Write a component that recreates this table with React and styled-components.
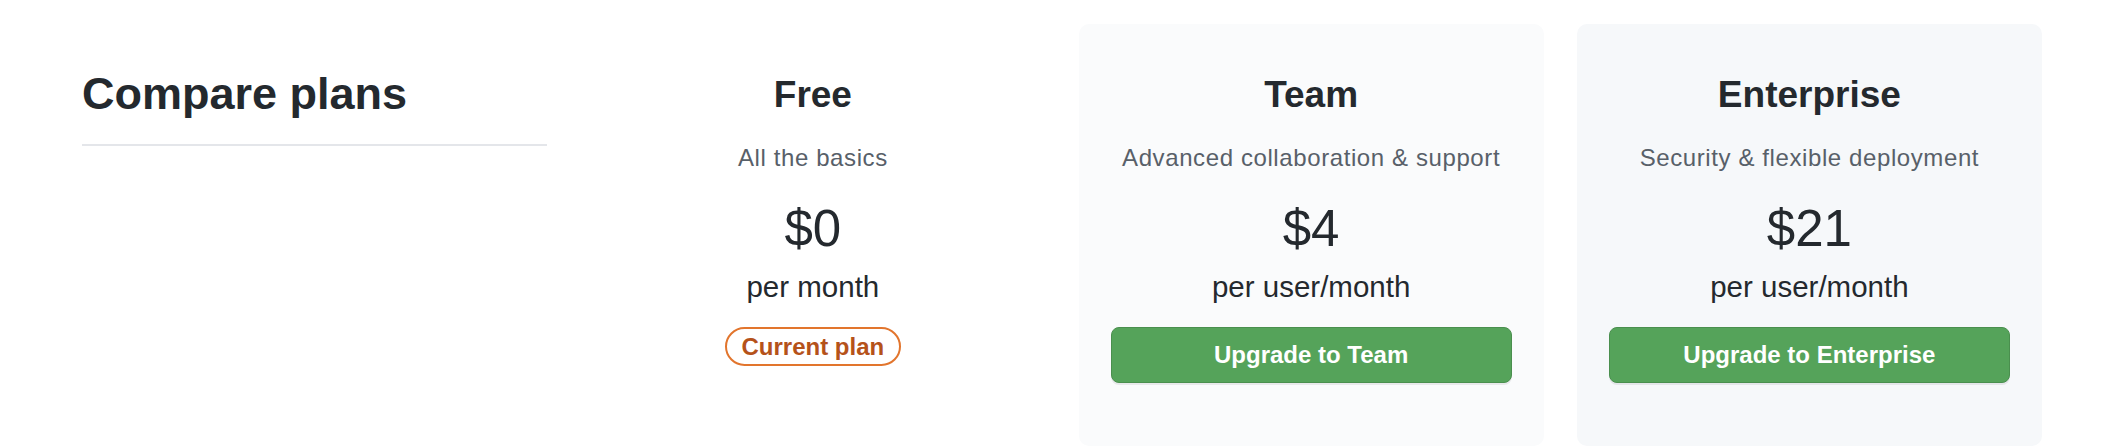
import React from "react";
import styled, { createGlobalStyle } from "styled-components";

const GlobalStyle = createGlobalStyle`
  html, body {
    margin: 0;
    padding: 0;
    background: #ffffff;
    overflow: hidden;
  }
  body {
    font-family: "Liberation Sans", Arial, Helvetica, sans-serif;
    color: #24292e;
  }
`;

const Page = styled.div`
  padding: 24px 66px 0 82px;
`;

const Grid = styled.div`
  display: grid;
  grid-template-columns: repeat(4, 1fr);
  column-gap: 33px;
  align-items: start;
`;

const Intro = styled.div`
  padding-top: 43px;
`;

const Heading = styled.h2`
  margin: 0;
  font-size: 45px;
  line-height: 54px;
  font-weight: 700;
  color: #24292e;
  padding-bottom: 23px;
  border-bottom: 2px solid #e4e6ea;
`;

const Plan = styled.div`
  display: flex;
  flex-direction: column;
  align-items: center;
  text-align: center;
  min-height: 422px;
  box-sizing: border-box;
  padding: 49px 32px 0;
  border-radius: 10px;
  background: ${(p) => p.$bg || "transparent"};
`;

const PlanName = styled.h3`
  margin: 0;
  font-size: 37px;
  line-height: 44px;
  font-weight: 700;
  color: #24292e;
`;

const Tagline = styled.p`
  margin: 27px 0 0;
  font-size: 24px;
  line-height: 28px;
  letter-spacing: 0.6px;
  color: #586069;
`;

const Price = styled.div`
  margin-top: 27px;
  font-size: 51px;
  line-height: 60px;
  color: #24292e;
`;

const Period = styled.div`
  margin-top: 10px;
  font-size: 29.5px;
  line-height: 36px;
  color: #24292e;
`;

const Badge = styled.span`
  margin-top: 22px;
  display: inline-block;
  padding: 0 15px;
  line-height: 35px;
  font-size: 24px;
  font-weight: 700;
  color: #b5521a;
  border: 2px solid #e2752d;
  border-radius: 999px;
`;

const UpgradeButton = styled.button`
  margin-top: 22px;
  width: 100%;
  height: 56px;
  box-sizing: border-box;
  font-family: inherit;
  font-size: 24px;
  font-weight: 700;
  color: #ffffff;
  background: #55a35a;
  border: 1px solid #4a8f4e;
  border-radius: 8px;
  box-shadow: 0 2px 0 rgba(27, 31, 35, 0.08);
  cursor: pointer;
`;

const plans = [
  {
    name: "Free",
    tagline: "All the basics",
    price: "$0",
    period: "per month",
    current: true,
  },
  {
    name: "Team",
    tagline: "Advanced collaboration & support",
    price: "$4",
    period: "per user/month",
    bg: "#fafbfc",
  },
  {
    name: "Enterprise",
    tagline: "Security & flexible deployment",
    price: "$21",
    period: "per user/month",
    bg: "#f6f8fa",
  },
];

export default function App() {
  return (
    <>
      <GlobalStyle />
      <Page>
        <Grid>
          <Intro>
            <Heading>Compare plans</Heading>
          </Intro>
          {plans.map((p) => (
            <Plan key={p.name} $bg={p.bg}>
              <PlanName>{p.name}</PlanName>
              <Tagline>{p.tagline}</Tagline>
              <Price>{p.price}</Price>
              <Period>{p.period}</Period>
              {p.current ? (
                <Badge>Current plan</Badge>
              ) : (
                <UpgradeButton>Upgrade to {p.name}</UpgradeButton>
              )}
            </Plan>
          ))}
        </Grid>
      </Page>
    </>
  );
}
